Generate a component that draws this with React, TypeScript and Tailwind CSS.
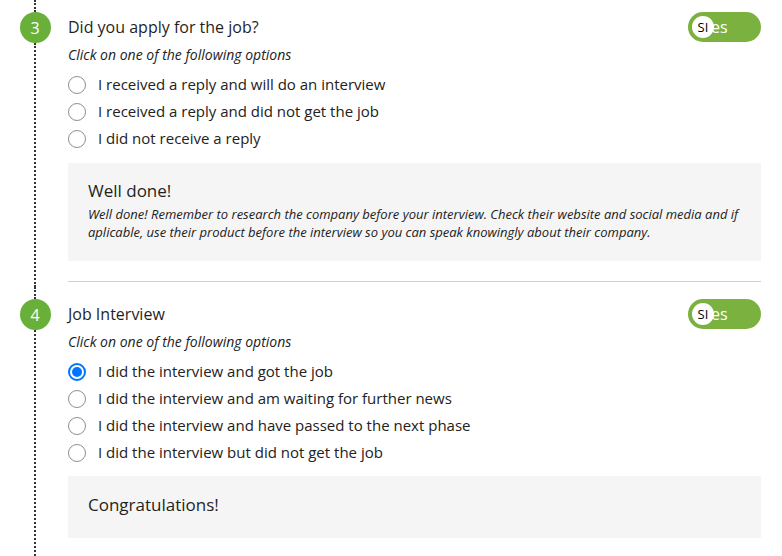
import { ReactNode } from 'react';

const font = { fontFamily: '"Open Sans", "Liberation Sans", sans-serif' };

function Radio({ checked }: { checked?: boolean }) {
  if (checked) {
    return (
      <span className="shrink-0 w-[18px] h-[18px] rounded-full border-2 border-[#0075ff] bg-white flex items-center justify-center">
        <span className="w-[10px] h-[10px] rounded-full bg-[#0075ff]" />
      </span>
    );
  }
  return <span className="shrink-0 w-[18px] h-[18px] rounded-full border border-[#8f8f8f] bg-white" />;
}

function Toggle() {
  return (
    <div className="relative w-[73px] h-[30px] rounded-full bg-[#7bb13f] flex items-center">
      <span className="absolute left-[14px] text-[16px] text-white leading-none">Yes</span>
      <span className="relative ml-[4px] w-[22px] h-[22px] rounded-full bg-white flex items-center justify-center text-[13px] text-black leading-none">
        SI
      </span>
    </div>
  );
}

function Step({
  num,
  title,
  options,
  checked,
  children,
  last,
}: {
  num: number;
  title: string;
  options: string[];
  checked?: number;
  children: ReactNode;
  last?: boolean;
}) {
  return (
    <div className={last ? 'flex flex-1' : 'flex'}>
      {/* Timeline gutter */}
      <div className="w-[70px] shrink-0 flex flex-col items-center">
        <div className="h-[12px] border-l-2 border-dotted border-[#333]" />
        <div className="w-[31px] h-[31px] rounded-full bg-[#69b03a] text-white text-[16px] flex items-center justify-center">
          {num}
        </div>
        <div className="flex-1 border-l-2 border-dotted border-[#333]" />
      </div>

      {/* Content */}
      <div className="flex-1 -ml-[2px] mr-[21px]">
        <div className="mt-[12px] h-[30px] flex items-center justify-between">
          <h3 className="text-[16px] text-[#1f1f1f]">{title}</h3>
          <Toggle />
        </div>
        <p className="mt-[3px] text-[14px] leading-[20px] italic text-[#222]">
          Click on one of the following options
        </p>
        <div className="mt-[6px]">
          {options.map((o, i) => (
            <label key={o} className="h-[27px] flex items-center gap-[12px] text-[15px] text-[#222]">
              <Radio checked={checked === i} />
              {o}
            </label>
          ))}
        </div>
        {children}
      </div>
    </div>
  );
}

export default function App() {
  return (
    <div className="min-h-screen flex flex-col bg-white" style={font}>
      <Step
        num={3}
        title="Did you apply for the job?"
        options={[
          'I received a reply and will do an interview',
          'I received a reply and did not get the job',
          'I did not receive a reply',
        ]}
      >
        <div className="mt-[11px] bg-[#f5f5f5] px-[20px] pt-[16px] pb-[20px]">
          <h4 className="text-[17px] leading-[24px] text-[#1f1f1f]">Well done!</h4>
          <p className="mt-[2px] text-[13px] leading-[18px] italic text-[#222] whitespace-nowrap">
            Well done! Remember to research the company before your interview. Check their website and social media and if
            <br />
            aplicable, use their product before the interview so you can speak knowingly about their company.
          </p>
        </div>
        <div className="mt-[20px] pb-[5px] border-t border-[#d0d0d0]" />
      </Step>
      <Step
        num={4}
        title="Job Interview"
        checked={0}
        last
        options={[
          'I did the interview and got the job',
          'I did the interview and am waiting for further news',
          'I did the interview and have passed to the next phase',
          'I did the interview but did not get the job',
        ]}
      >
        <div className="mt-[10px] bg-[#f5f5f5] px-[20px] pt-[17px] pb-[21px]">
          <h4 className="text-[17px] leading-[24px] text-[#1f1f1f]">Congratulations!</h4>
        </div>
      </Step>
    </div>
  );
}
